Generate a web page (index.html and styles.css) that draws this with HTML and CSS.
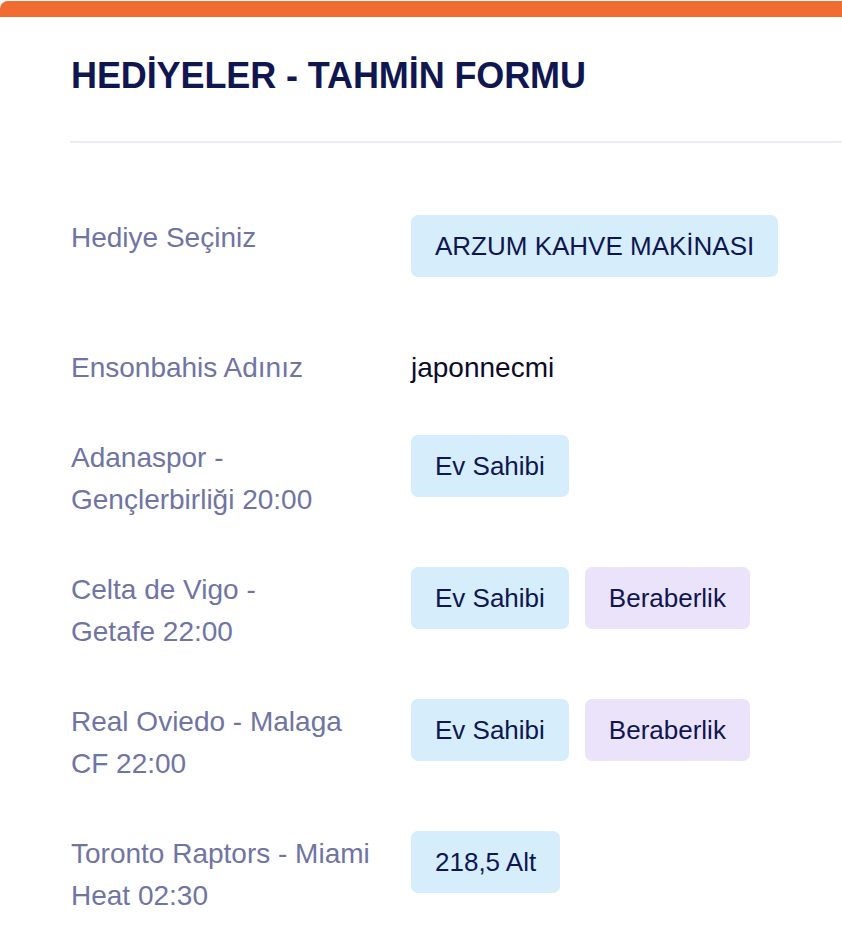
FILE: index.html
```html
<!DOCTYPE html>
<html lang="tr">
<head>
<meta charset="utf-8">
<title>Hediyeler - Tahmin Formu</title>
<link rel="stylesheet" href="styles.css">
</head>
<body>
<div class="card">
  <div class="card-head">
    <h1 class="title">HEDİYELER - TAHMİN FORMU</h1>
  </div>
  <div class="form">
    <div class="row row-gift">
      <div class="label">Hediye Seçiniz</div>
      <div class="opts"><span class="btn blue">ARZUM KAHVE MAKİNASI</span></div>
    </div>
    <div class="row row-name">
      <div class="label">Ensonbahis Adınız</div>
      <div class="value">japonnecmi</div>
    </div>
    <div class="row">
      <div class="label">Adanaspor -<br>Gençlerbirliği 20:00</div>
      <div class="opts"><span class="btn blue">Ev Sahibi</span></div>
    </div>
    <div class="row">
      <div class="label">Celta de Vigo -<br>Getafe 22:00</div>
      <div class="opts"><span class="btn blue">Ev Sahibi</span><span class="btn purple">Beraberlik</span></div>
    </div>
    <div class="row">
      <div class="label">Real Oviedo - Malaga<br>CF 22:00</div>
      <div class="opts"><span class="btn blue">Ev Sahibi</span><span class="btn purple">Beraberlik</span></div>
    </div>
    <div class="row">
      <div class="label">Toronto Raptors - Miami<br>Heat 02:30</div>
      <div class="opts"><span class="btn blue">218,5 Alt</span></div>
    </div>
  </div>
</div>
</body>
</html>
```
FILE: styles.css
```css
html, body {
  margin: 0;
  padding: 0;
  background: #ffffff;
  overflow: hidden;
}
body {
  font-family: "Liberation Sans", Arial, Helvetica, sans-serif;
  width: 842px;
  height: 934px;
}
.card {
  border-top: 16px solid #f06c30;
  border-top-left-radius: 8px;
  background: #ffffff;
  padding-left: 70px;
  margin-top: 1px;
}
.card-head {
  border-bottom: 2px solid #ececf2;
  height: 124px;
  display: flex;
  align-items: flex-start;
}
.title {
  margin: 0;
  padding-top: 38px;
  padding-left: 1px;
  font-size: 36px;
  line-height: 42px;
  font-weight: 700;
  color: #0f1650;
  letter-spacing: -0.1px;
}
.form {
  display: flex;
  flex-direction: column;
  padding-top: 72px;
  padding-left: 1px;
}
.row {
  display: flex;
  align-items: flex-start;
  margin-bottom: 46px;
}
.row-gift {
  margin-bottom: 70px;
}
.label {
  width: 340px;
  flex: none;
  font-size: 28px;
  line-height: 42px;
  color: #7074a3;
  margin-top: 2px;
}
.row-name .label {
  margin-top: 0;
}
.value {
  font-size: 28px;
  line-height: 42px;
  color: #0b0b2a;
}
.opts {
  display: flex;
  gap: 16px;
}
.btn {
  display: inline-block;
  height: 62px;
  line-height: 62px;
  padding: 0 24px;
  border-radius: 7px;
  font-size: 26px;
  color: #0f1650;
  white-space: nowrap;
}
.blue {
  background: #d6eefb;
}
.purple {
  background: #ebe3fa;
}
```
